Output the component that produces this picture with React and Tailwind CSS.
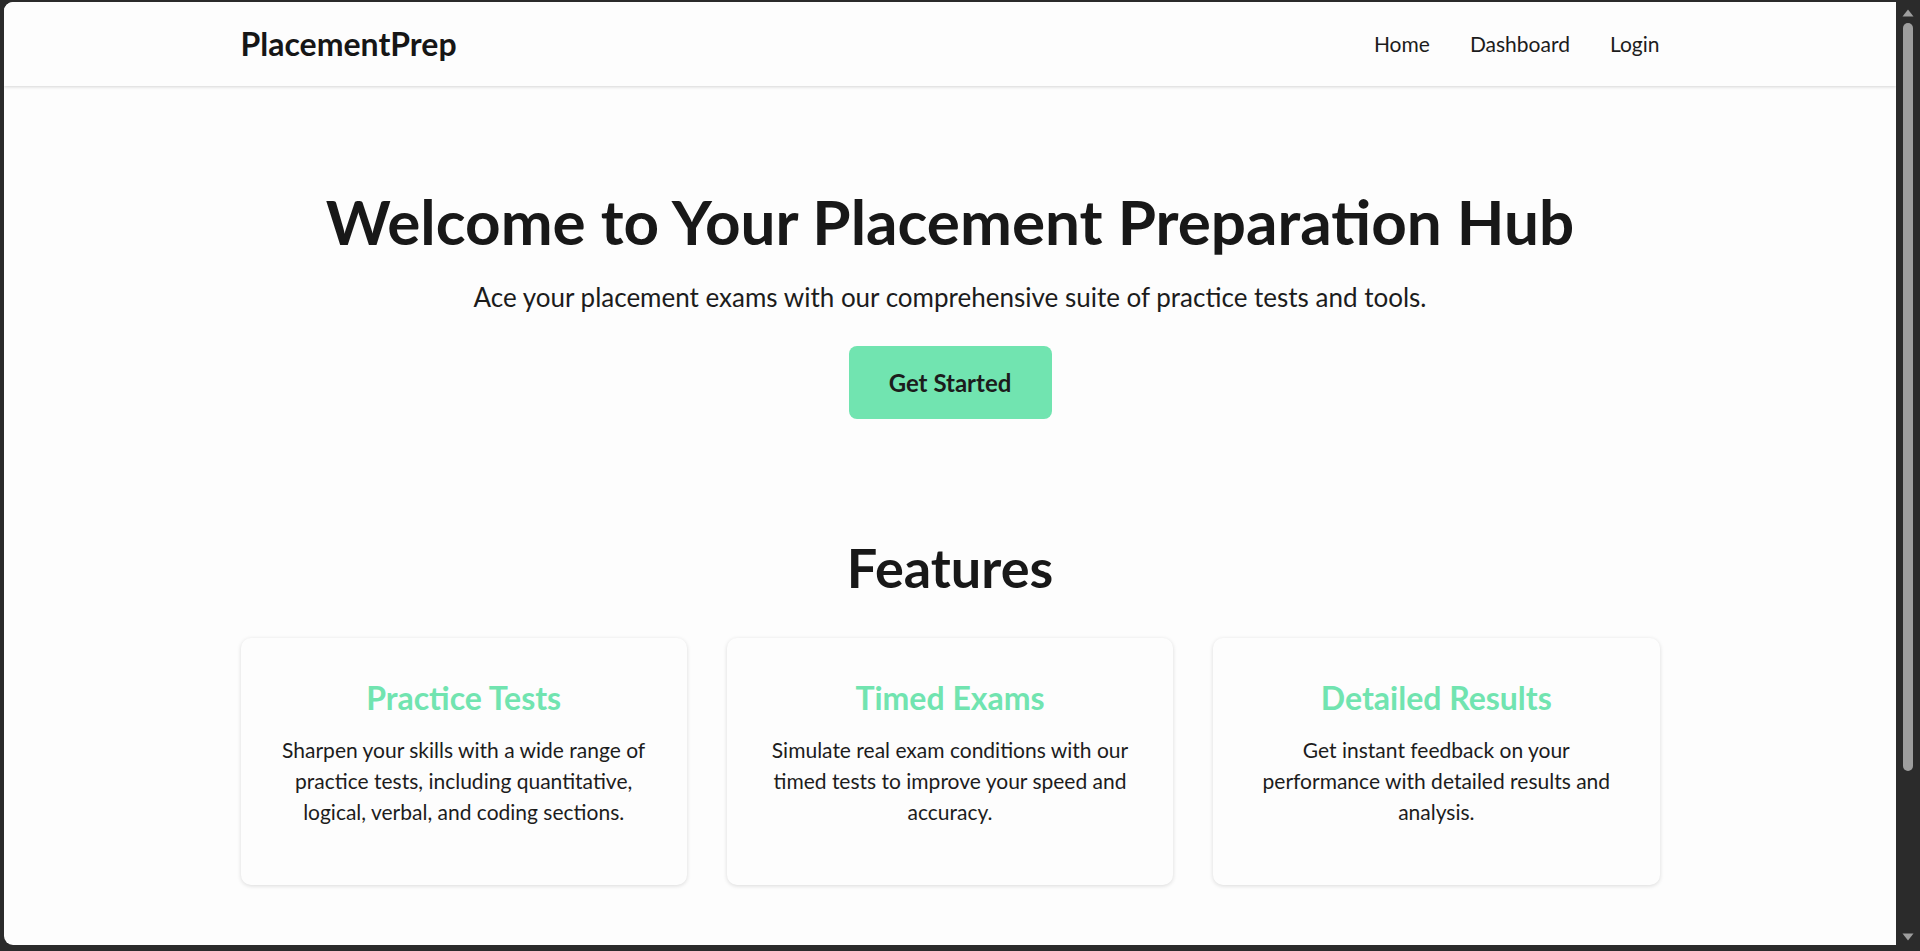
import React from "react";

const font = { fontFamily: '"Lato", "Noto Sans", sans-serif' };

function Card({ title, lines }) {
  return (
    <div className="flex flex-col items-center rounded-[10px] bg-[#fdfdfd] pt-[43px] pb-[58px] px-6 text-center shadow-[0_1px_4px_rgba(0,0,0,0.14)]">
      <h3 className="text-[32px] font-bold leading-[34px] text-[#71e4b0]">{title}</h3>
      <p className="mt-[19px] text-[21px] leading-[31px] text-[#1c1c1c]">
        {lines.map((l, i) => (
          <React.Fragment key={i}>
            {l}
            {i < lines.length - 1 && <br />}
          </React.Fragment>
        ))}
      </p>
    </div>
  );
}

export default function App() {
  return (
    <div style={font} className="flex h-[951px] w-[1920px] overflow-hidden bg-[#2b2b2b]">
      <div className="flex flex-1 flex-col pt-[2px] pl-[4px] pb-[6px]">
        <div className="flex-1 overflow-hidden rounded-l-[9px] bg-[#fdfdfd]">
          <nav className="relative z-10 h-[84px] bg-[#fdfdfd] shadow-[0_1px_3px_rgba(0,0,0,0.16)]">
            <div className="mx-auto flex h-full w-3/4 items-center justify-between">
              <span className="text-[32px] font-bold leading-[40px] text-[#161616]">PlacementPrep</span>
              <div className="flex items-center gap-10 text-[21px] leading-[28px] text-[#1c1c1c]">
                <span>Home</span>
                <span>Dashboard</span>
                <span>Login</span>
              </div>
            </div>
          </nav>
          <main className="mx-auto w-3/4">
            <section className="flex flex-col items-center pt-[97px] text-center">
              <h1 className="text-[62px] font-bold leading-[77px] text-[#181818]">
                Welcome to Your Placement Preparation Hub
              </h1>
              <p className="mt-[22px] text-[26px] leading-[30px] text-[#1c1c1c]">
                Ace your placement exams with our comprehensive suite of practice tests and tools.
              </p>
              <button className="mt-[34px] flex h-[73px] w-[203px] items-center justify-center rounded-[8px] bg-[#71e4b0] text-[24px] font-bold text-[#1c1c1c]">
                Get Started
              </button>
            </section>
            <section className="mt-[120px] flex flex-col items-center">
              <h2 className="text-[54px] font-bold leading-[58px] text-[#181818]">Features</h2>
              <div className="mt-[41px] grid w-full grid-cols-3 gap-10">
                <Card
                  title="Practice Tests"
                  lines={[
                    "Sharpen your skills with a wide range of",
                    "practice tests, including quantitative,",
                    "logical, verbal, and coding sections.",
                  ]}
                />
                <Card
                  title="Timed Exams"
                  lines={[
                    "Simulate real exam conditions with our",
                    "timed tests to improve your speed and",
                    "accuracy.",
                  ]}
                />
                <Card
                  title="Detailed Results"
                  lines={[
                    "Get instant feedback on your",
                    "performance with detailed results and",
                    "analysis.",
                  ]}
                />
              </div>
            </section>
          </main>
        </div>
      </div>
      <div className="flex w-[24px] flex-col items-center pt-[8px] pb-[10px]">
        <svg width="12" height="8" viewBox="0 0 12 8" className="mt-[1px]">
          <path d="M6 0.5 L11.5 7.5 L0.5 7.5 Z" fill="#9e9e9e" />
        </svg>
        <div className="mt-[6px] h-[748px] w-[10px] rounded-full bg-[#9e9e9e]" />
        <div className="flex-1" />
        <svg width="12" height="8" viewBox="0 0 12 8">
          <path d="M0.5 0.5 L11.5 0.5 L6 7.5 Z" fill="#9e9e9e" />
        </svg>
      </div>
    </div>
  );
}
